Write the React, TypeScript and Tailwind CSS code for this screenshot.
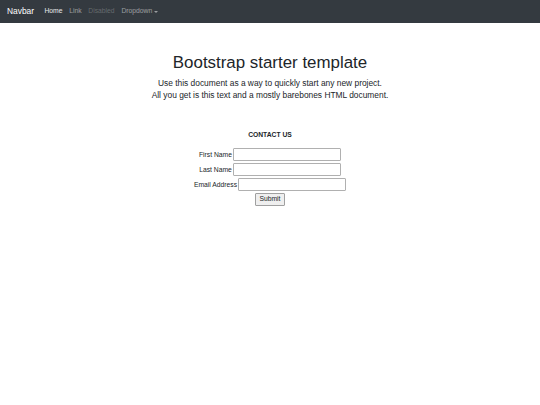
export default function App() {
  return (
    <div className="min-h-screen bg-white font-['Liberation_Sans',Arial,sans-serif] text-[#212529]">
      {/* Navbar */}
      <nav className="flex h-[23px] items-center bg-[#343a40] px-[7px]">
        <span className="mr-[7px] text-[8.4px] leading-none text-white">Navbar</span>
        <ul className="flex items-center text-[6.75px] leading-none">
          <li className="px-[3.4px] text-white/90">Home</li>
          <li className="px-[3.4px] text-white/50">Link</li>
          <li className="px-[3.4px] text-white/25">Disabled</li>
          <li className="flex items-center px-[3.4px] text-white/50">
            Dropdown
            <span className="ml-[2px] inline-block h-0 w-0 border-x-[2px] border-t-[2.5px] border-x-transparent border-t-white/50" />
          </li>
        </ul>
      </nav>

      <main className="mx-auto flex flex-col items-center pt-[30px] text-center">
        <h1 className="text-[16.9px] leading-[20px] font-medium">Bootstrap starter template</h1>
        <p className="mt-[3.5px] text-[8.4px] leading-[12.6px]">
          Use this document as a way to quickly start any new project.
          <br />
          All you get is this text and a mostly barebones HTML document.
        </p>

        <h3 className="mt-[28px] text-[6.75px] font-bold">CONTACT US</h3>

        <form className="mt-[8.5px] flex flex-col items-center gap-[2px] text-[6.75px]">
          <div className="flex items-center">
            <label className="mr-[1px]">First Name</label>
            <input className="h-[13px] w-[108px] rounded-[1px] border border-[#b0b0b0] bg-white" />
          </div>
          <div className="flex items-center">
            <label className="mr-[1px]">Last Name</label>
            <input className="h-[13px] w-[108px] rounded-[1px] border border-[#b0b0b0] bg-white" />
          </div>
          <div className="flex items-center">
            <label className="mr-[1px]">Email Address</label>
            <input className="h-[13px] w-[108px] rounded-[1px] border border-[#b0b0b0] bg-white" />
          </div>
          <button
            type="button"
            className="h-[13px] rounded-[1px] border border-[#a0a0a0] bg-[#efefef] px-[3px] text-[6.75px] leading-none"
          >
            Submit
          </button>
        </form>
      </main>
    </div>
  );
}
